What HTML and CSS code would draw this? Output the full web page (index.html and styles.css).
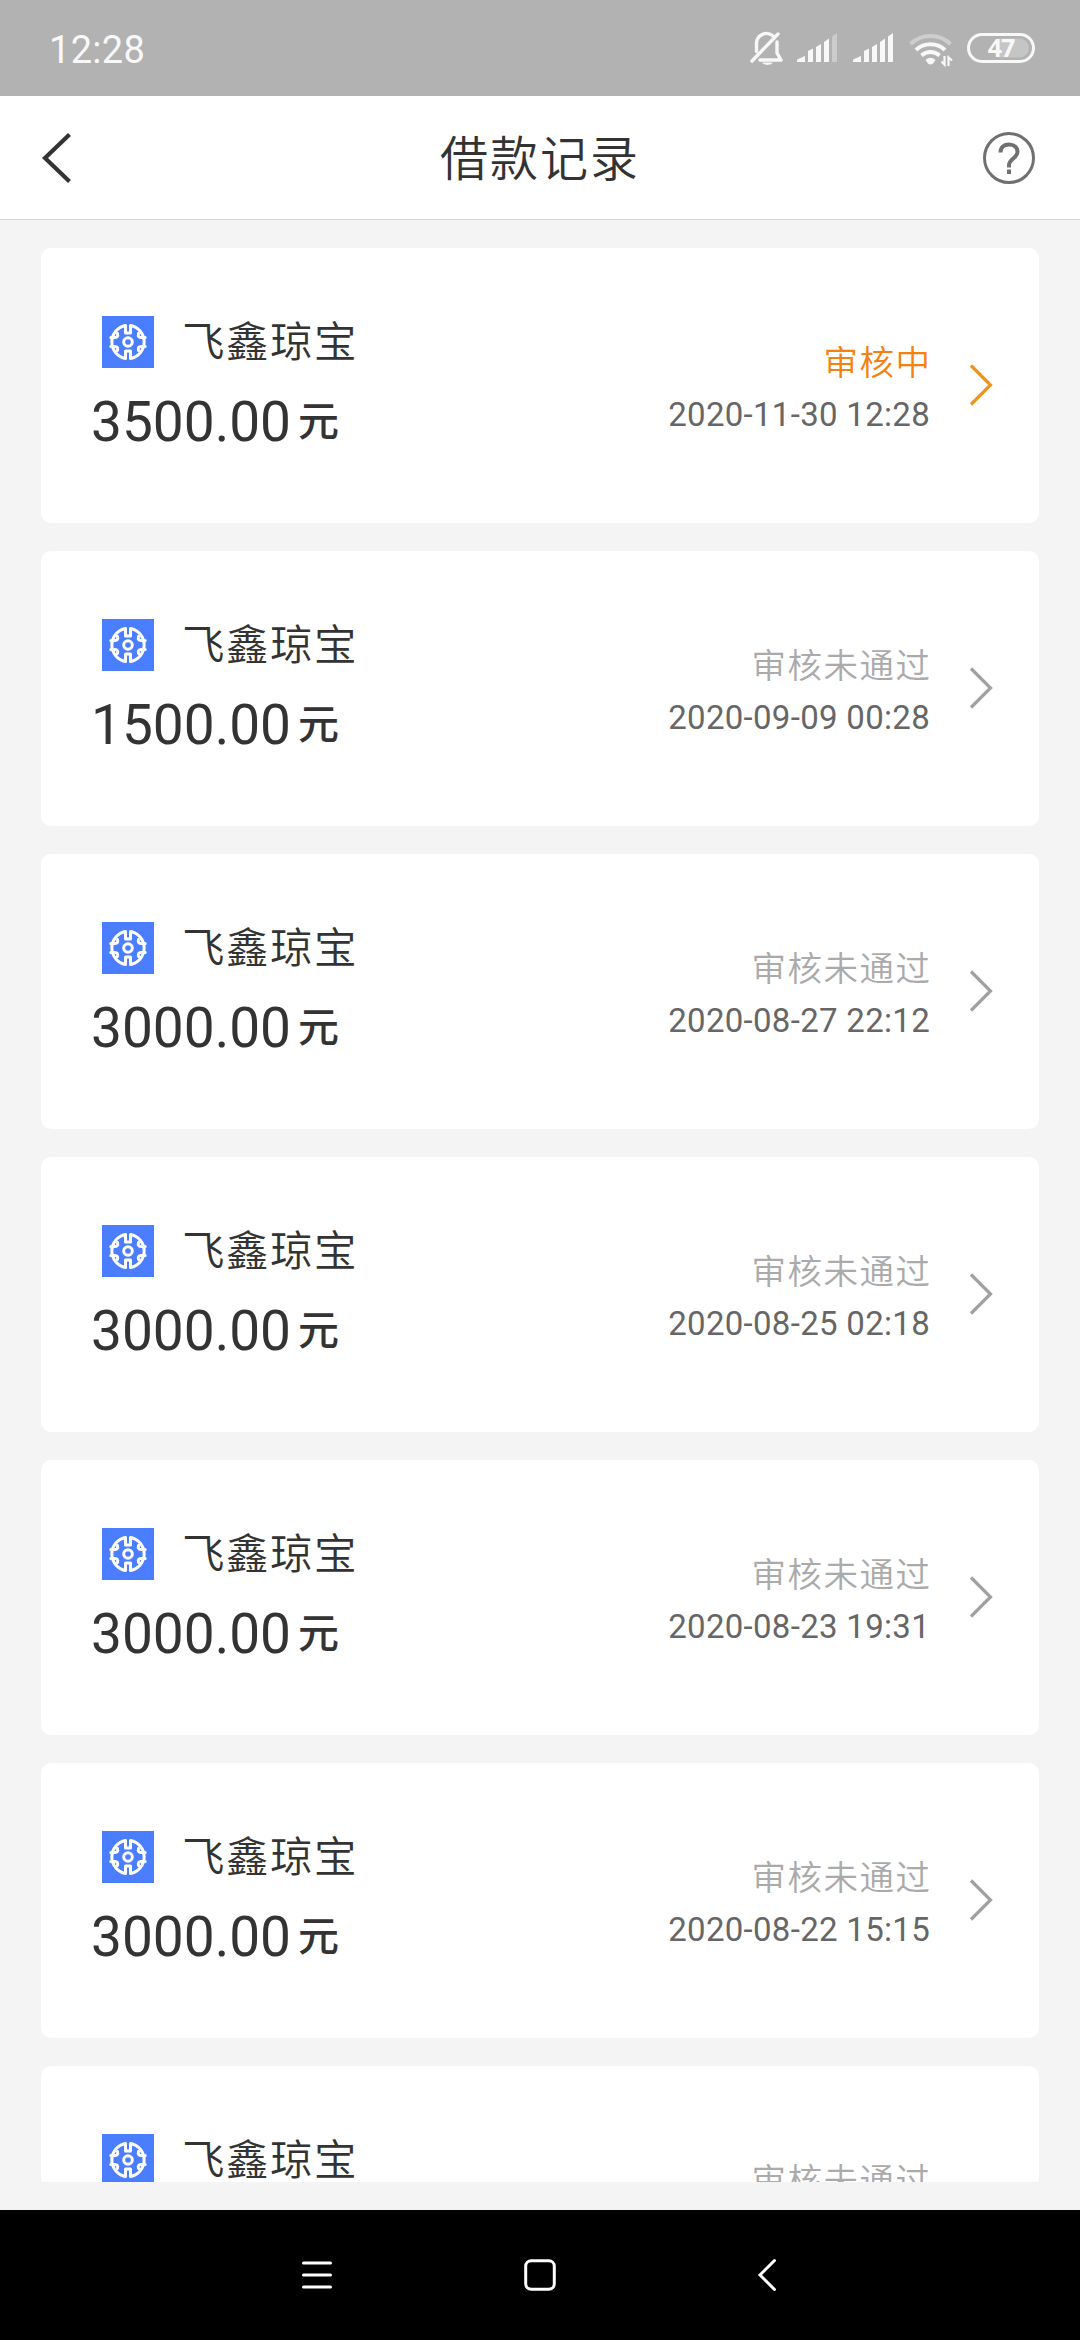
FILE: index.html
```html
<!DOCTYPE html>
<html lang="zh-CN">
<head>
<meta charset="utf-8">
<title>借款记录</title>
<link rel="stylesheet" href="styles.css">
</head>
<body>
<svg class="defs" width="0" height="0" aria-hidden="true">
  <symbol id="logo" viewBox="0 0 52 52">
    <g fill="none" stroke="#fff" stroke-width="3" stroke-linejoin="round" stroke-linecap="round">
      <path d="M23.500 9.500V17h5V9.500A16.800 16.800 0 0 1 28.500 42.500V35h-5v7.500A16.800 16.800 0 0 1 23.500 9.500Z"/>
      <path d="M8.800 21.500H13q3.500 0 2.500-4M8.800 30.500H13q3.500 0 2.500 4M43.200 21.500H39q-3.500 0-2.500-4M43.200 30.500H39q-3.500 0-2.500 4"/>
      <circle cx="26" cy="26" r="4.300"/>
    </g>
  </symbol>
  <symbol id="next" viewBox="0 0 24 44">
    <path fill="none" stroke="currentColor" stroke-width="3.200" d="M2 2.500 21.500 22 2 41.500"/>
  </symbol>
</svg>
<div class="screen">
  <div class="status">
    <span class="clock">12:28</span>
    <svg class="indicators" width="290" height="40" viewBox="0 0 290 40">
      <g fill="none" stroke="#f8f8f8" stroke-width="3.400" stroke-linecap="round" stroke-linejoin="round">
        <path d="M6.500 21.500V14a10 10 0 0 1 16-8.500M27 12v11l4 7H10"/>
        <path d="M2 31 28 4"/>
      </g>
      <path fill="#f8f8f8" d="M12 32.500h11a6 4 0 0 1-11 0Z"/>
      <g fill="#f8f8f8">
        <path d="M47 32V30.500q0-1 1-1.600L55 26v6ZM58 32V21l5-2.500V32ZM66 32V17l5-3v18ZM74 32V12l5-3.500V32Z"/>
        <path opacity=".35" d="M82 32V6.500L87 3v29Z"/>
        <path d="M103 32V30.500q0-1 1-1.600l7-2.900v6ZM114 32V21l5-2.500V32ZM122 32V17l5-3v18ZM130 32V12l5-3.500V32ZM138 32V6.500L143 3v29Z"/>
      </g>
      <g fill="none" stroke="#f8f8f8" stroke-width="4">
        <path opacity=".4" d="M160.500 14a29 29 0 0 1 40 0"/>
        <path d="M166 20a21.500 21.500 0 0 1 29 0"/>
        <path d="M171.500 25.500a13.500 13.500 0 0 1 18 0"/>
      </g>
      <path fill="#f8f8f8" d="M175.500 30q5-4.500 10 0l-2.500 3.500q-2.500 2-5 0Z"/>
      <path fill="none" stroke="#f8f8f8" stroke-width="2.200" d="M191.500 31.500l3 3V26M202 30.500 198.500 27.500v8.500"/>
      <path fill="#fff" opacity=".25" d="M249 8.500h20.500a9.500 9.500 0 0 1 0 19H249Z"/>
      <rect x="218.500" y="4.500" width="65" height="27" rx="13.500" fill="none" stroke="#f8f8f8" stroke-width="3"/>
      <text class="charge" x="251" y="27" text-anchor="middle">47</text>
    </svg>
  </div>
  <header class="bar">
    <svg width="30" height="52" viewBox="0 0 30 52"><path fill="none" stroke="#333" stroke-width="4.200" d="M28.500 2.500 4 26 28.500 49.500"/></svg>
    <h1 class="title">借款记录</h1>
    <svg width="54" height="54" viewBox="0 0 54 54" fill="none" stroke="#707070"><circle cx="27" cy="27" r="24.500" stroke-width="3"/><path stroke-width="4" d="M18.500 21.500c0-5.500 3.500-8 8.500-8s8.500 3 8.500 7.500c0 6-8.500 7-8.500 13v2.500M27 38.500v4.500"/></svg>
  </header>
  <main class="list">
    <article class="card pending">
      <div class="loan"><div class="product"><svg class="logo"><use href="#logo"/></svg><span class="name">飞鑫琼宝</span></div><div class="amount">3500.00<span class="unit">元</span></div></div>
      <div class="state"><div class="result">审核中</div><time class="date">2020-11-30 12:28</time></div>
      <svg class="next"><use href="#next"/></svg>
    </article>
    <article class="card">
      <div class="loan"><div class="product"><svg class="logo"><use href="#logo"/></svg><span class="name">飞鑫琼宝</span></div><div class="amount">1500.00<span class="unit">元</span></div></div>
      <div class="state"><div class="result">审核未通过</div><time class="date">2020-09-09 00:28</time></div>
      <svg class="next"><use href="#next"/></svg>
    </article>
    <article class="card">
      <div class="loan"><div class="product"><svg class="logo"><use href="#logo"/></svg><span class="name">飞鑫琼宝</span></div><div class="amount">3000.00<span class="unit">元</span></div></div>
      <div class="state"><div class="result">审核未通过</div><time class="date">2020-08-27 22:12</time></div>
      <svg class="next"><use href="#next"/></svg>
    </article>
    <article class="card">
      <div class="loan"><div class="product"><svg class="logo"><use href="#logo"/></svg><span class="name">飞鑫琼宝</span></div><div class="amount">3000.00<span class="unit">元</span></div></div>
      <div class="state"><div class="result">审核未通过</div><time class="date">2020-08-25 02:18</time></div>
      <svg class="next"><use href="#next"/></svg>
    </article>
    <article class="card">
      <div class="loan"><div class="product"><svg class="logo"><use href="#logo"/></svg><span class="name">飞鑫琼宝</span></div><div class="amount">3000.00<span class="unit">元</span></div></div>
      <div class="state"><div class="result">审核未通过</div><time class="date">2020-08-23 19:31</time></div>
      <svg class="next"><use href="#next"/></svg>
    </article>
    <article class="card">
      <div class="loan"><div class="product"><svg class="logo"><use href="#logo"/></svg><span class="name">飞鑫琼宝</span></div><div class="amount">3000.00<span class="unit">元</span></div></div>
      <div class="state"><div class="result">审核未通过</div><time class="date">2020-08-22 15:15</time></div>
      <svg class="next"><use href="#next"/></svg>
    </article>
    <article class="card cut">
      <div class="loan"><div class="product"><svg class="logo"><use href="#logo"/></svg><span class="name">飞鑫琼宝</span></div></div>
      <div class="state"><div class="result">审核未通过</div></div>
    </article>
  </main>
  <nav class="keys">
    <svg class="menu" width="32" height="32" viewBox="0 0 32 32"><path stroke="#fff" stroke-width="3" stroke-linecap="round" d="M2.500 4h27M2.500 16h27M2.500 28h27"/></svg>
    <svg class="home" width="32" height="34" viewBox="0 0 32 34"><rect x="1.700" y="2.700" width="28.600" height="28.600" rx="5.500" fill="none" stroke="#fff" stroke-width="3"/></svg>
    <svg class="back" width="20" height="34" viewBox="0 0 20 34"><path fill="none" stroke="#fff" stroke-width="3" stroke-linecap="round" d="M17.500 2.500 3 17l14.500 14.500"/></svg>
  </nav>
</div>
</body>
</html>
```
FILE: styles.css
```css
* { box-sizing: border-box; }

body {
  margin: 0;
  background: #f4f4f4;
  color: #333;
  font-family: Roboto, "Noto Sans CJK SC", sans-serif;
}

svg { display: block; flex: none; }
.defs { position: absolute; }

.screen {
  display: flex;
  flex-direction: column;
  width: 1080px;
  height: 2340px;
  overflow: hidden;
}

.status {
  display: flex;
  justify-content: space-between;
  align-items: center;
  height: 96px;
  padding: 3px 40px 0 49px;
  background: #b2b2b2;
  color: #f8f8f8;
}

.clock { font-size: 38px; line-height: 44px; letter-spacing: .3px; }
.charge { font: 700 25px "Noto Sans", sans-serif; letter-spacing: -1px; fill: #f8f8f8; }

.bar {
  display: flex;
  justify-content: space-between;
  align-items: center;
  height: 124px;
  padding: 0 44px 0 41px;
  border-bottom: 1px solid #d5d5d5;
  background: #fff;
}

.title {
  margin: 0;
  font-size: 48px;
  font-weight: 350;
  line-height: 60px;
  letter-spacing: 2px;
  padding: 4px 0 0 27px;
}

.list {
  display: flex;
  flex-direction: column;
  gap: 28px;
  height: 1962px;
  padding: 28px 41px 0;
  overflow: hidden;
}

.card {
  display: flex;
  flex: none;
  height: 275px;
  padding: 66px 46px 0 50px;
  border-radius: 10px;
  background: #fff;
}

.cut { height: 116px; border-radius: 10px 10px 0 0; overflow: hidden; }

.loan { flex: 1; }
.product { display: flex; align-items: center; height: 56px; padding-left: 11px; gap: 28px; }
.logo { width: 52px; height: 52px; background: #4b7eff; }
.name { font-size: 42.500px; font-weight: 350; line-height: 56px; letter-spacing: 1.500px; padding-top: 1px; }
.amount { display: flex; font-size: 55px; line-height: 64px; margin-top: 20px; }
.unit { font-size: 41px; font-weight: 500; margin-left: 7px; }

.state { padding-top: 25px; text-align: right; }
.result { font-size: 34.500px; font-weight: 350; line-height: 48px; letter-spacing: 1.500px; margin-right: -1.500px; color: #aaa; }
.date { display: block; font-size: 33px; line-height: 40px; letter-spacing: .3px; color: #666; margin-top: 8px; }

.next { width: 24px; height: 44px; margin: 49px 0 0 39px; color: #a0a0a0; }

.pending .result { color: #f5820f; }
.pending .next { color: #ee941c; }
.cut .state { padding-right: 63px; }

.keys {
  display: flex;
  align-items: center;
  height: 130px;
  margin-top: 28px;
  background: #000;
}
.menu { margin-left: 301px; }
.home { margin-left: 191px; }
.back { margin-left: 201px; }
```
